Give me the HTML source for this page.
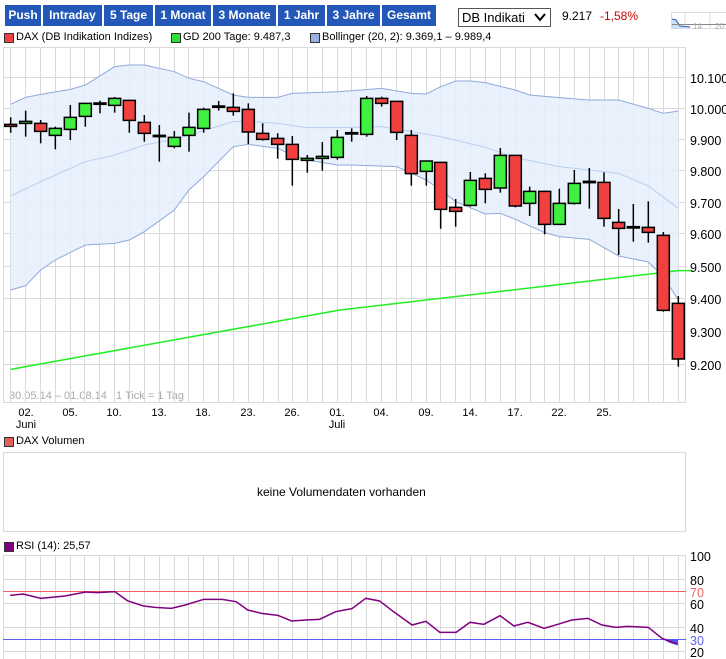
<!DOCTYPE html>
<html><head><meta charset="utf-8"><style>
body{margin:0;width:726px;height:659px;overflow:hidden;background:#fff;font-family:"Liberation Sans",sans-serif;position:relative}
.b{position:absolute;top:5px;height:21px;background:#2358b8;color:#fff;font-weight:bold;font-size:12px;line-height:21px;text-align:center;font-family:"Liberation Sans",sans-serif}
.t{position:absolute;font-size:11px;color:#000;white-space:pre}
.sq{position:absolute;width:8px;height:8px;border:1px solid #333}
</style></head><body>
<div class="b" style="left:5px;width:36px">Push</div>
<div class="b" style="left:43px;width:59px">Intraday</div>
<div class="b" style="left:104px;width:49px">5 Tage</div>
<div class="b" style="left:155px;width:56px">1 Monat</div>
<div class="b" style="left:213px;width:63px">3 Monate</div>
<div class="b" style="left:278px;width:47px">1 Jahr</div>
<div class="b" style="left:327px;width:53px">3 Jahre</div>
<div class="b" style="left:382px;width:54px">Gesamt</div>
<div style="position:absolute;left:458px;top:8px;width:88px;height:17px;border:1px solid #555;font-size:13px;line-height:17px;padding-left:3px">DB Indikati<svg style="position:absolute;right:4px;top:4px" width="12" height="9"><path d="M1 1 L6 7 L11 1" stroke="#000" stroke-width="2" fill="none"/></svg></div>
<div class="t" style="left:562px;top:9px;font-size:12px">9.217</div>
<div class="t" style="left:600px;top:9px;font-size:12px;color:#c00">-1,58%</div>
<div class="sq" style="left:4px;top:33px;background:#f04040"></div><div class="t" style="left:16px;top:31px">DAX (DB Indikation Indizes)</div>
<div class="sq" style="left:171px;top:33px;background:#30e030"></div><div class="t" style="left:183px;top:31px">GD 200 Tage: 9.487,3</div>
<div class="sq" style="left:310px;top:33px;background:#9ab0e0"></div><div class="t" style="left:322px;top:31px">Bollinger (20, 2): 9.369,1 – 9.989,4</div>
<div class="sq" style="left:4px;top:437px;background:#e06060"></div><div class="t" style="left:16px;top:435px">DAX Volumen</div>
<div class="t" style="left:257px;top:485px;font-size:12px">keine Volumendaten vorhanden</div>
<div class="sq" style="left:4px;top:542px;background:#800080"></div><div class="t" style="left:16px;top:540px">RSI (14): 25,57</div>
<div class="t" style="left:9px;top:390px;color:#aaa">30.05.14 – 01.08.14   1 Tick = 1 Tag</div>
<svg width="726" height="659" style="position:absolute;left:0;top:0" font-family="Liberation Sans,sans-serif">
<g stroke="#ddd" fill="none"><rect x="671.5" y="12.5" width="60" height="16"/><line x1="685" y1="12" x2="685" y2="29"/><line x1="710" y1="12" x2="710" y2="29"/></g>
<path d="M672 19 L676 20 L680 26 L690 27 L690 29 L672 29Z" fill="#cfe0f5"/>
<path d="M672 19 L676 20 L680 26 L690 27" stroke="#2a5cb0" fill="none"/>
<line x1="672" y1="24.5" x2="726" y2="24.5" stroke="#888"/>
<text x="693" y="29" font-size="8" fill="#aaa">14</text><text x="715" y="29" font-size="8" fill="#aaa">20</text>
<g stroke="#d9d9d9" stroke-width="1">
<line x1="3.5" y1="48" x2="3.5" y2="403"/><line x1="685.5" y1="48" x2="685.5" y2="403"/>
<line x1="3" y1="47.5" x2="686" y2="47.5"/><line x1="3" y1="402.5" x2="686" y2="402.5"/>
<line x1="3" y1="77.5" x2="686" y2="77.5"/><line x1="3" y1="108.5" x2="686" y2="108.5"/><line x1="3" y1="139.5" x2="686" y2="139.5"/><line x1="3" y1="170.5" x2="686" y2="170.5"/><line x1="3" y1="202.5" x2="686" y2="202.5"/><line x1="3" y1="233.5" x2="686" y2="233.5"/><line x1="3" y1="266.5" x2="686" y2="266.5"/><line x1="3" y1="298.5" x2="686" y2="298.5"/><line x1="3" y1="331.5" x2="686" y2="331.5"/><line x1="3" y1="364.5" x2="686" y2="364.5"/>
<line x1="10.5" y1="48" x2="10.5" y2="403"/><line x1="25.5" y1="48" x2="25.5" y2="403"/><line x1="40.5" y1="48" x2="40.5" y2="403"/><line x1="55.5" y1="48" x2="55.5" y2="403"/><line x1="70.5" y1="48" x2="70.5" y2="403"/><line x1="84.5" y1="48" x2="84.5" y2="403"/><line x1="99.5" y1="48" x2="99.5" y2="403"/><line x1="114.5" y1="48" x2="114.5" y2="403"/><line x1="129.5" y1="48" x2="129.5" y2="403"/><line x1="144.5" y1="48" x2="144.5" y2="403"/><line x1="159.5" y1="48" x2="159.5" y2="403"/><line x1="174.5" y1="48" x2="174.5" y2="403"/><line x1="188.5" y1="48" x2="188.5" y2="403"/><line x1="203.5" y1="48" x2="203.5" y2="403"/><line x1="218.5" y1="48" x2="218.5" y2="403"/><line x1="233.5" y1="48" x2="233.5" y2="403"/><line x1="248.5" y1="48" x2="248.5" y2="403"/><line x1="263.5" y1="48" x2="263.5" y2="403"/><line x1="278.5" y1="48" x2="278.5" y2="403"/><line x1="292.5" y1="48" x2="292.5" y2="403"/><line x1="307.5" y1="48" x2="307.5" y2="403"/><line x1="322.5" y1="48" x2="322.5" y2="403"/><line x1="337.5" y1="48" x2="337.5" y2="403"/><line x1="351.5" y1="48" x2="351.5" y2="403"/><line x1="366.5" y1="48" x2="366.5" y2="403"/><line x1="381.5" y1="48" x2="381.5" y2="403"/><line x1="396.5" y1="48" x2="396.5" y2="403"/><line x1="411.5" y1="48" x2="411.5" y2="403"/><line x1="426.5" y1="48" x2="426.5" y2="403"/><line x1="440.5" y1="48" x2="440.5" y2="403"/><line x1="455.5" y1="48" x2="455.5" y2="403"/><line x1="470.5" y1="48" x2="470.5" y2="403"/><line x1="485.5" y1="48" x2="485.5" y2="403"/><line x1="500.5" y1="48" x2="500.5" y2="403"/><line x1="515.5" y1="48" x2="515.5" y2="403"/><line x1="530.5" y1="48" x2="530.5" y2="403"/><line x1="544.5" y1="48" x2="544.5" y2="403"/><line x1="559.5" y1="48" x2="559.5" y2="403"/><line x1="574.5" y1="48" x2="574.5" y2="403"/><line x1="589.5" y1="48" x2="589.5" y2="403"/><line x1="604.5" y1="48" x2="604.5" y2="403"/><line x1="618.5" y1="48" x2="618.5" y2="403"/><line x1="633.5" y1="48" x2="633.5" y2="403"/><line x1="648.5" y1="48" x2="648.5" y2="403"/><line x1="663.5" y1="48" x2="663.5" y2="403"/><line x1="678.5" y1="48" x2="678.5" y2="403"/>
</g>
<g transform="translate(0,60) scale(0.33333)">
<path fill="#e5eefb" fill-opacity="0.85" d="M32 133 L77 112 L122 103 L211 88 L256 75 L344 20 L388 15 L433 15 L523 35 L567 55 L611 65 L700 105 L745 112 L833 112 L877 100 L1020 95 L1145 85 L1234 100 L1279 102 L1322 80 L1367 63 L1411 63 L1456 68 L1546 90 L1589 105 L1678 113 L1765 120 L1856 120 L1945 145 L1990 160 L2035 153 L2035 720 L1990 650 L1945 606 L1856 588 L1768 538 L1678 530 L1634 518 L1546 478 L1501 460 L1456 462 L1367 425 L1322 390 L1279 360 L1190 320 L1050 315 L1012 315 L922 300 L877 285 L833 265 L745 253 L700 260 L611 350 L567 390 L523 450 L433 515 L388 540 L344 550 L256 555 L166 600 L122 630 L77 677 L32 690Z"/>
<path fill="none" stroke="#8fa8dc" vector-effect="non-scaling-stroke" d="M32 133 L77 112 L122 103 L211 88 L256 75 L344 20 L388 15 L433 15 L523 35 L567 55 L611 65 L700 105 L745 112 L833 112 L877 100 L1020 95 L1145 85 L1234 100 L1279 102 L1322 80 L1367 63 L1411 63 L1456 68 L1546 90 L1589 105 L1678 113 L1765 120 L1856 120 L1945 145 L1990 160 L2035 153"/>
<path fill="none" stroke="#8fa8dc" vector-effect="non-scaling-stroke" d="M32 690 L77 677 L122 630 L166 600 L256 555 L344 550 L388 540 L433 515 L523 450 L567 390 L611 350 L700 260 L745 253 L833 265 L877 285 L922 300 L1012 315 L1050 315 L1190 320 L1279 360 L1322 390 L1367 425 L1456 462 L1501 460 L1546 478 L1634 518 L1678 530 L1768 538 L1856 588 L1945 606 L1990 650 L2035 720"/>
<path fill="none" stroke="#b8cff2" vector-effect="non-scaling-stroke" d="M32 408 L122 365 L256 305 L344 285 L433 255 L523 238 L611 212 L700 185 L745 183 L833 190 L922 203 L1020 203 L1145 200 L1234 215 L1322 230 L1456 262 L1546 293 L1678 320 L1856 340 L1945 378 L2035 445"/>
<path fill="none" stroke="#22ee22" stroke-width="1.5" vector-effect="non-scaling-stroke" d="M32 928 L1020 750 L2035 632 L2075 632"/>
</g>
<g transform="translate(0,60) scale(0.33333)" stroke="#000" stroke-width="1.5">
<line x1="32" y1="172" x2="32" y2="218" vector-effect="non-scaling-stroke"/><rect x="14" y="193" width="36" height="6" fill="#f04040" vector-effect="non-scaling-stroke"/>
<line x1="77" y1="152" x2="77" y2="230" vector-effect="non-scaling-stroke"/><rect x="59" y="184" width="36" height="6" fill="#40f040" vector-effect="non-scaling-stroke"/>
<line x1="122" y1="180" x2="122" y2="250" vector-effect="non-scaling-stroke"/><rect x="104" y="190" width="36" height="24" fill="#f04040" vector-effect="non-scaling-stroke"/>
<line x1="166" y1="200" x2="166" y2="268" vector-effect="non-scaling-stroke"/><rect x="148" y="205" width="36" height="21" fill="#40f040" vector-effect="non-scaling-stroke"/>
<line x1="211" y1="135" x2="211" y2="240" vector-effect="non-scaling-stroke"/><rect x="193" y="172" width="36" height="36" fill="#40f040" vector-effect="non-scaling-stroke"/>
<line x1="256" y1="130" x2="256" y2="200" vector-effect="non-scaling-stroke"/><rect x="238" y="130" width="36" height="39" fill="#40f040" vector-effect="non-scaling-stroke"/>
<line x1="300" y1="122" x2="300" y2="160" vector-effect="non-scaling-stroke"/><rect x="282" y="129" width="36" height="4" fill="#000" vector-effect="non-scaling-stroke"/>
<line x1="344" y1="111" x2="344" y2="158" vector-effect="non-scaling-stroke"/><rect x="326" y="115" width="36" height="21" fill="#40f040" vector-effect="non-scaling-stroke"/>
<line x1="388" y1="121" x2="388" y2="218" vector-effect="non-scaling-stroke"/><rect x="370" y="121" width="36" height="60" fill="#f04040" vector-effect="non-scaling-stroke"/>
<line x1="433" y1="165" x2="433" y2="245" vector-effect="non-scaling-stroke"/><rect x="415" y="187" width="36" height="33" fill="#f04040" vector-effect="non-scaling-stroke"/>
<line x1="478" y1="195" x2="478" y2="305" vector-effect="non-scaling-stroke"/><rect x="460" y="226" width="36" height="4" fill="#000" vector-effect="non-scaling-stroke"/>
<line x1="523" y1="213" x2="523" y2="265" vector-effect="non-scaling-stroke"/><rect x="505" y="232" width="36" height="27" fill="#40f040" vector-effect="non-scaling-stroke"/>
<line x1="567" y1="158" x2="567" y2="275" vector-effect="non-scaling-stroke"/><rect x="549" y="202" width="36" height="24" fill="#40f040" vector-effect="non-scaling-stroke"/>
<line x1="611" y1="143" x2="611" y2="218" vector-effect="non-scaling-stroke"/><rect x="593" y="148" width="36" height="57" fill="#40f040" vector-effect="non-scaling-stroke"/>
<line x1="656" y1="123" x2="656" y2="152" vector-effect="non-scaling-stroke"/><rect x="638" y="138" width="36" height="4" fill="#000" vector-effect="non-scaling-stroke"/>
<line x1="700" y1="100" x2="700" y2="167" vector-effect="non-scaling-stroke"/><rect x="682" y="142" width="36" height="12" fill="#f04040" vector-effect="non-scaling-stroke"/>
<line x1="745" y1="130" x2="745" y2="252" vector-effect="non-scaling-stroke"/><rect x="727" y="148" width="36" height="68" fill="#f04040" vector-effect="non-scaling-stroke"/>
<line x1="788" y1="190" x2="788" y2="242" vector-effect="non-scaling-stroke"/><rect x="770" y="220" width="36" height="18" fill="#f04040" vector-effect="non-scaling-stroke"/>
<line x1="833" y1="220" x2="833" y2="296" vector-effect="non-scaling-stroke"/><rect x="815" y="235" width="36" height="18" fill="#f04040" vector-effect="non-scaling-stroke"/>
<line x1="877" y1="228" x2="877" y2="377" vector-effect="non-scaling-stroke"/><rect x="859" y="253" width="36" height="45" fill="#f04040" vector-effect="non-scaling-stroke"/>
<line x1="922" y1="285" x2="922" y2="338" vector-effect="non-scaling-stroke"/><rect x="904" y="295" width="36" height="6" fill="#40f040" vector-effect="non-scaling-stroke"/>
<line x1="967" y1="246" x2="967" y2="332" vector-effect="non-scaling-stroke"/><rect x="949" y="289" width="36" height="6" fill="#40f040" vector-effect="non-scaling-stroke"/>
<line x1="1012" y1="210" x2="1012" y2="299" vector-effect="non-scaling-stroke"/><rect x="994" y="232" width="36" height="60" fill="#40f040" vector-effect="non-scaling-stroke"/>
</g>
<g transform="translate(340,60) scale(0.33333)" stroke="#000" stroke-width="1.5">
<line x1="35" y1="205" x2="35" y2="245" vector-effect="non-scaling-stroke"/><rect x="17" y="218" width="36" height="4" fill="#000" vector-effect="non-scaling-stroke"/>
<line x1="80" y1="108" x2="80" y2="230" vector-effect="non-scaling-stroke"/><rect x="62" y="115" width="36" height="108" fill="#40f040" vector-effect="non-scaling-stroke"/>
<line x1="125" y1="110" x2="125" y2="140" vector-effect="non-scaling-stroke"/><rect x="107" y="115" width="36" height="15" fill="#f04040" vector-effect="non-scaling-stroke"/>
<line x1="170" y1="124" x2="170" y2="240" vector-effect="non-scaling-stroke"/><rect x="152" y="124" width="36" height="93" fill="#f04040" vector-effect="non-scaling-stroke"/>
<line x1="214" y1="210" x2="214" y2="377" vector-effect="non-scaling-stroke"/><rect x="196" y="226" width="36" height="115" fill="#f04040" vector-effect="non-scaling-stroke"/>
<line x1="259" y1="303" x2="259" y2="377" vector-effect="non-scaling-stroke"/><rect x="241" y="303" width="36" height="31" fill="#40f040" vector-effect="non-scaling-stroke"/>
<line x1="302" y1="307" x2="302" y2="506" vector-effect="non-scaling-stroke"/><rect x="284" y="307" width="36" height="141" fill="#f04040" vector-effect="non-scaling-stroke"/>
<line x1="347" y1="417" x2="347" y2="500" vector-effect="non-scaling-stroke"/><rect x="329" y="442" width="36" height="12" fill="#f04040" vector-effect="non-scaling-stroke"/>
<line x1="391" y1="336" x2="391" y2="440" vector-effect="non-scaling-stroke"/><rect x="373" y="361" width="36" height="75" fill="#40f040" vector-effect="non-scaling-stroke"/>
<line x1="436" y1="340" x2="436" y2="430" vector-effect="non-scaling-stroke"/><rect x="418" y="355" width="36" height="33" fill="#f04040" vector-effect="non-scaling-stroke"/>
<line x1="481" y1="264" x2="481" y2="398" vector-effect="non-scaling-stroke"/><rect x="463" y="286" width="36" height="98" fill="#40f040" vector-effect="non-scaling-stroke"/>
<line x1="526" y1="286" x2="526" y2="442" vector-effect="non-scaling-stroke"/><rect x="508" y="286" width="36" height="152" fill="#f04040" vector-effect="non-scaling-stroke"/>
<line x1="569" y1="380" x2="569" y2="468" vector-effect="non-scaling-stroke"/><rect x="551" y="394" width="36" height="36" fill="#40f040" vector-effect="non-scaling-stroke"/>
<line x1="614" y1="392" x2="614" y2="523" vector-effect="non-scaling-stroke"/><rect x="596" y="394" width="36" height="99" fill="#f04040" vector-effect="non-scaling-stroke"/>
<line x1="658" y1="386" x2="658" y2="493" vector-effect="non-scaling-stroke"/><rect x="640" y="430" width="36" height="63" fill="#40f040" vector-effect="non-scaling-stroke"/>
<line x1="703" y1="330" x2="703" y2="434" vector-effect="non-scaling-stroke"/><rect x="685" y="370" width="36" height="60" fill="#40f040" vector-effect="non-scaling-stroke"/>
<line x1="748" y1="324" x2="748" y2="446" vector-effect="non-scaling-stroke"/><rect x="730" y="364" width="36" height="4" fill="#000" vector-effect="non-scaling-stroke"/>
<line x1="792" y1="337" x2="792" y2="500" vector-effect="non-scaling-stroke"/><rect x="774" y="367" width="36" height="108" fill="#f04040" vector-effect="non-scaling-stroke"/>
<line x1="836" y1="447" x2="836" y2="585" vector-effect="non-scaling-stroke"/><rect x="818" y="487" width="36" height="18" fill="#f04040" vector-effect="non-scaling-stroke"/>
<line x1="880" y1="432" x2="880" y2="545" vector-effect="non-scaling-stroke"/><rect x="862" y="500" width="36" height="4" fill="#000" vector-effect="non-scaling-stroke"/>
<line x1="925" y1="424" x2="925" y2="548" vector-effect="non-scaling-stroke"/><rect x="907" y="502" width="36" height="15" fill="#f04040" vector-effect="non-scaling-stroke"/>
<line x1="970" y1="516" x2="970" y2="755" vector-effect="non-scaling-stroke"/><rect x="952" y="526" width="36" height="225" fill="#f04040" vector-effect="non-scaling-stroke"/>
<line x1="1015" y1="708" x2="1015" y2="920" vector-effect="non-scaling-stroke"/><rect x="997" y="730" width="36" height="167" fill="#f04040" vector-effect="non-scaling-stroke"/>
</g>
<g font-size="12.5" fill="#000">
<text x="690" y="83">10.100</text><text x="690" y="114">10.000</text><text x="690" y="145">9.900</text><text x="690" y="176">9.800</text><text x="690" y="208">9.700</text><text x="690" y="239">9.600</text><text x="690" y="272">9.500</text><text x="690" y="304">9.400</text><text x="690" y="337">9.300</text><text x="690" y="370">9.200</text>
</g>
<g font-size="11" fill="#000" text-anchor="middle">
<text x="26" y="416">02.</text><text x="70" y="416">05.</text><text x="114" y="416">10.</text><text x="159" y="416">13.</text><text x="203" y="416">18.</text><text x="248" y="416">23.</text><text x="292" y="416">26.</text><text x="337" y="416">01.</text><text x="381" y="416">04.</text><text x="426" y="416">09.</text><text x="470" y="416">14.</text><text x="515" y="416">17.</text><text x="559" y="416">22.</text><text x="604" y="416">25.</text>
<text x="26" y="428">Juni</text><text x="337" y="428">Juli</text>
</g>
<rect x="3.5" y="452.5" width="682" height="79" fill="none" stroke="#d9d9d9"/>
<g stroke="#d9d9d9">
<line x1="3" y1="555.5" x2="686" y2="555.5"/><line x1="3" y1="579.5" x2="686" y2="579.5"/><line x1="3" y1="603.5" x2="686" y2="603.5"/><line x1="3" y1="627.5" x2="686" y2="627.5"/><line x1="3" y1="651.5" x2="686" y2="651.5"/>
<line x1="3.5" y1="556" x2="3.5" y2="659"/><line x1="685.5" y1="556" x2="685.5" y2="659"/>
<line x1="25.5" y1="556" x2="25.5" y2="659"/><line x1="40.5" y1="556" x2="40.5" y2="659"/><line x1="55.5" y1="556" x2="55.5" y2="659"/><line x1="70.5" y1="556" x2="70.5" y2="659"/><line x1="84.5" y1="556" x2="84.5" y2="659"/><line x1="99.5" y1="556" x2="99.5" y2="659"/><line x1="114.5" y1="556" x2="114.5" y2="659"/><line x1="129.5" y1="556" x2="129.5" y2="659"/><line x1="144.5" y1="556" x2="144.5" y2="659"/><line x1="159.5" y1="556" x2="159.5" y2="659"/><line x1="174.5" y1="556" x2="174.5" y2="659"/><line x1="188.5" y1="556" x2="188.5" y2="659"/><line x1="203.5" y1="556" x2="203.5" y2="659"/><line x1="218.5" y1="556" x2="218.5" y2="659"/><line x1="233.5" y1="556" x2="233.5" y2="659"/><line x1="248.5" y1="556" x2="248.5" y2="659"/><line x1="263.5" y1="556" x2="263.5" y2="659"/><line x1="278.5" y1="556" x2="278.5" y2="659"/><line x1="292.5" y1="556" x2="292.5" y2="659"/><line x1="307.5" y1="556" x2="307.5" y2="659"/><line x1="322.5" y1="556" x2="322.5" y2="659"/><line x1="337.5" y1="556" x2="337.5" y2="659"/><line x1="351.5" y1="556" x2="351.5" y2="659"/><line x1="366.5" y1="556" x2="366.5" y2="659"/><line x1="381.5" y1="556" x2="381.5" y2="659"/><line x1="396.5" y1="556" x2="396.5" y2="659"/><line x1="411.5" y1="556" x2="411.5" y2="659"/><line x1="426.5" y1="556" x2="426.5" y2="659"/><line x1="440.5" y1="556" x2="440.5" y2="659"/><line x1="455.5" y1="556" x2="455.5" y2="659"/><line x1="470.5" y1="556" x2="470.5" y2="659"/><line x1="485.5" y1="556" x2="485.5" y2="659"/><line x1="500.5" y1="556" x2="500.5" y2="659"/><line x1="515.5" y1="556" x2="515.5" y2="659"/><line x1="530.5" y1="556" x2="530.5" y2="659"/><line x1="544.5" y1="556" x2="544.5" y2="659"/><line x1="559.5" y1="556" x2="559.5" y2="659"/><line x1="574.5" y1="556" x2="574.5" y2="659"/><line x1="589.5" y1="556" x2="589.5" y2="659"/><line x1="604.5" y1="556" x2="604.5" y2="659"/><line x1="618.5" y1="556" x2="618.5" y2="659"/><line x1="633.5" y1="556" x2="633.5" y2="659"/><line x1="648.5" y1="556" x2="648.5" y2="659"/><line x1="663.5" y1="556" x2="663.5" y2="659"/><line x1="678.5" y1="556" x2="678.5" y2="659"/>
</g>
<line x1="3" y1="591.5" x2="686" y2="591.5" stroke="#f06060"/>
<line x1="3" y1="639.5" x2="686" y2="639.5" stroke="#6060f0"/>
<path d="M663 639.5 L670 643 L678 645.5 L678 639.5Z" fill="#5050f0"/>
<g transform="translate(0,530) scale(0.463,0.33333)">
<path fill="none" stroke="#800080" stroke-width="1.5" vector-effect="non-scaling-stroke" d="M22 196 L50 192 L88 205 L110 202 L140 198 L185 186 L210 188 L248 185 L275 212 L310 228 L335 232 L370 235 L400 225 L440 208 L480 208 L510 215 L535 240 L565 250 L600 256 L630 273 L660 270 L690 268 L725 245 L760 236 L790 205 L820 213 L850 245 L890 285 L920 274 L950 307 L985 307 L1015 277 L1045 283 L1080 257 L1110 288 L1140 277 L1175 295 L1205 283 L1235 270 L1270 265 L1300 285 L1330 292 L1355 289 L1400 292 L1430 325 L1462 342"/>
</g>
<g font-size="12.5" fill="#000">
<text x="690" y="561">100</text><text x="690" y="585">80</text><text x="690" y="597" fill="#f06060">70</text><text x="690" y="609">60</text><text x="690" y="633">40</text><text x="690" y="645" fill="#6060f0">30</text><text x="690" y="657">20</text>
</g>
</svg>
</body></html>
